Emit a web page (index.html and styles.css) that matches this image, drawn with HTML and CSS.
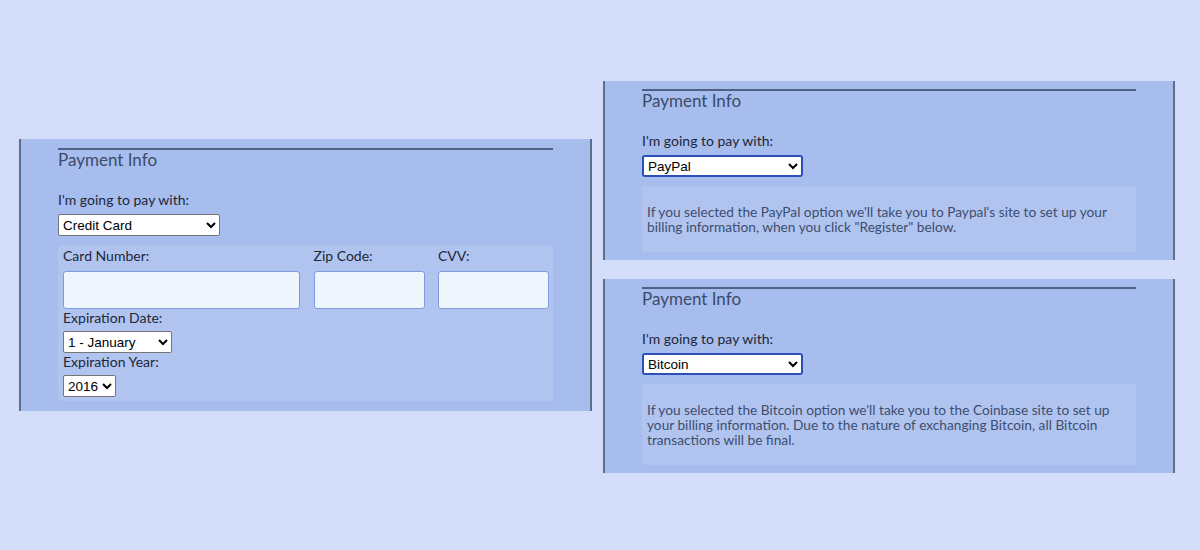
FILE: index.html
```html
<!DOCTYPE html>
<html>
<head>
<meta charset="utf-8">
<link rel="stylesheet" href="styles.css">
</head>
<body>
<div class="stage">
  <section class="panel panel-card">
    <h2 class="legend">Payment Info</h2>
    <label class="field-label">I'm going to pay with:</label>
    <select class="pay-select"><option>Credit Card</option></select>
    <div class="card-box">
      <div class="card-row">
        <div class="col">
          <label class="field-label">Card Number:</label>
          <input class="text-input" type="text">
        </div>
        <div class="col">
          <label class="field-label">Zip Code:</label>
          <input class="text-input" type="text">
        </div>
        <div class="col">
          <label class="field-label">CVV:</label>
          <input class="text-input" type="text">
        </div>
      </div>
      <label class="field-label exp-label">Expiration Date:</label>
      <select class="small-select month"><option>1 - January</option></select>
      <label class="field-label exp-label">Expiration Year:</label>
      <select class="small-select year"><option>2016</option></select>
    </div>
  </section>

  <div class="right-col">
    <section class="panel panel-alt">
      <h2 class="legend">Payment Info</h2>
      <label class="field-label">I'm going to pay with:</label>
      <select class="pay-select focused"><option>PayPal</option></select>
      <div class="info-box">
        <p>If you selected the PayPal option we'll take you to Paypal's site to set up your billing information, when you click "Register" below.</p>
      </div>
    </section>
    <section class="panel panel-alt">
      <h2 class="legend">Payment Info</h2>
      <label class="field-label">I'm going to pay with:</label>
      <select class="pay-select focused"><option>Bitcoin</option></select>
      <div class="info-box">
        <p>If you selected the Bitcoin option we'll take you to the Coinbase site to set up your billing information. Due to the nature of exchanging Bitcoin, all Bitcoin transactions will be final.</p>
      </div>
    </section>
  </div>
</div>
</body>
</html>
```

FILE: styles.css
```css
html, body {
  margin: 0;
  padding: 0;
  background: #d4defa;
  height: 100%;
}

body {
  font-family: "Lato", "Open Sans", sans-serif;
  overflow: hidden;
}

.stage {
  display: flex;
  align-items: flex-start;
  gap: 11px;
  padding-left: 19px;
}

.panel {
  background: #a7bdee;
  border-left: 2px solid #5d6f8e;
  border-right: 2px solid #5d6f8e;
  padding: 8px 37px 10px 37px;
  display: flex;
  flex-direction: column;
  align-items: flex-start;
}

.panel-card {
  width: 495px;
  margin-top: 139px;
  padding-top: 9px;
}

.right-col {
  margin-top: 81px;
  display: flex;
  flex-direction: column;
  gap: 19px;
}

.panel-alt {
  width: 494px;
  padding-bottom: 8px;
}

.legend {
  align-self: stretch;
  margin: 0;
  border-top: 2px solid #4f6283;
  padding-top: 0;
  font-size: 17px;
  line-height: 19px;
  font-weight: 400;
  color: #3b4b68;
}

.field-label {
  display: block;
  font-size: 14px;
  line-height: 18px;
  color: #1d2738;
}

.panel > .field-label {
  margin-top: 22px;
  margin-bottom: 5px;
}

.pay-select {
  width: 162px;
  height: 22px;
  font-family: "Liberation Sans", Arial, sans-serif;
  font-size: 13.5px;
  color: #000;
  background: #fff;
  border: 1px solid #767676;
  border-radius: 2px;
  padding: 0;
}

.pay-select.focused {
  width: 161px;
  height: 22px;
  border: 2px solid #2c4fb8;
  border-radius: 3px;
  outline: 1px solid #ffffff;
  outline-offset: -3px;
}

.card-box {
  align-self: stretch;
  margin-top: 9px;
  background: #b1c4f0;
  border-radius: 3px;
  padding: 2px 4px 4px 5px;
}

.card-row {
  display: flex;
  justify-content: space-between;
}

.col .field-label {
  margin-bottom: 6px;
}

.col:nth-child(1) { width: 237px; }
.col:nth-child(2) { width: 111px; }
.col:nth-child(3) { width: 111px; }

.text-input {
  box-sizing: border-box;
  display: block;
  width: 100%;
  height: 38px;
  background: #eef5fd;
  border: 1.5px solid #7d9be0;
  border-radius: 3px;
}

.exp-label {
  margin-top: 0;
  margin-bottom: 4px;
}

.small-select {
  display: block;
  box-sizing: border-box;
  height: 22px;
  font-family: "Liberation Sans", Arial, sans-serif;
  font-size: 13.5px;
  color: #000;
  background: #fff;
  border: 1px solid #767676;
  border-radius: 2px;
  padding: 0;
}

.small-select.month { width: 109px; }
.small-select.year { width: auto; }

.info-box {
  align-self: stretch;
  margin-top: 9px;
  background: #b1c4f0;
  border-radius: 3px;
  padding: 18px 20px 18px 5px;
}

.info-box p {
  margin: 0;
  font-size: 13.7px;
  line-height: 15px;
  color: #3d4e6d;
}
```
